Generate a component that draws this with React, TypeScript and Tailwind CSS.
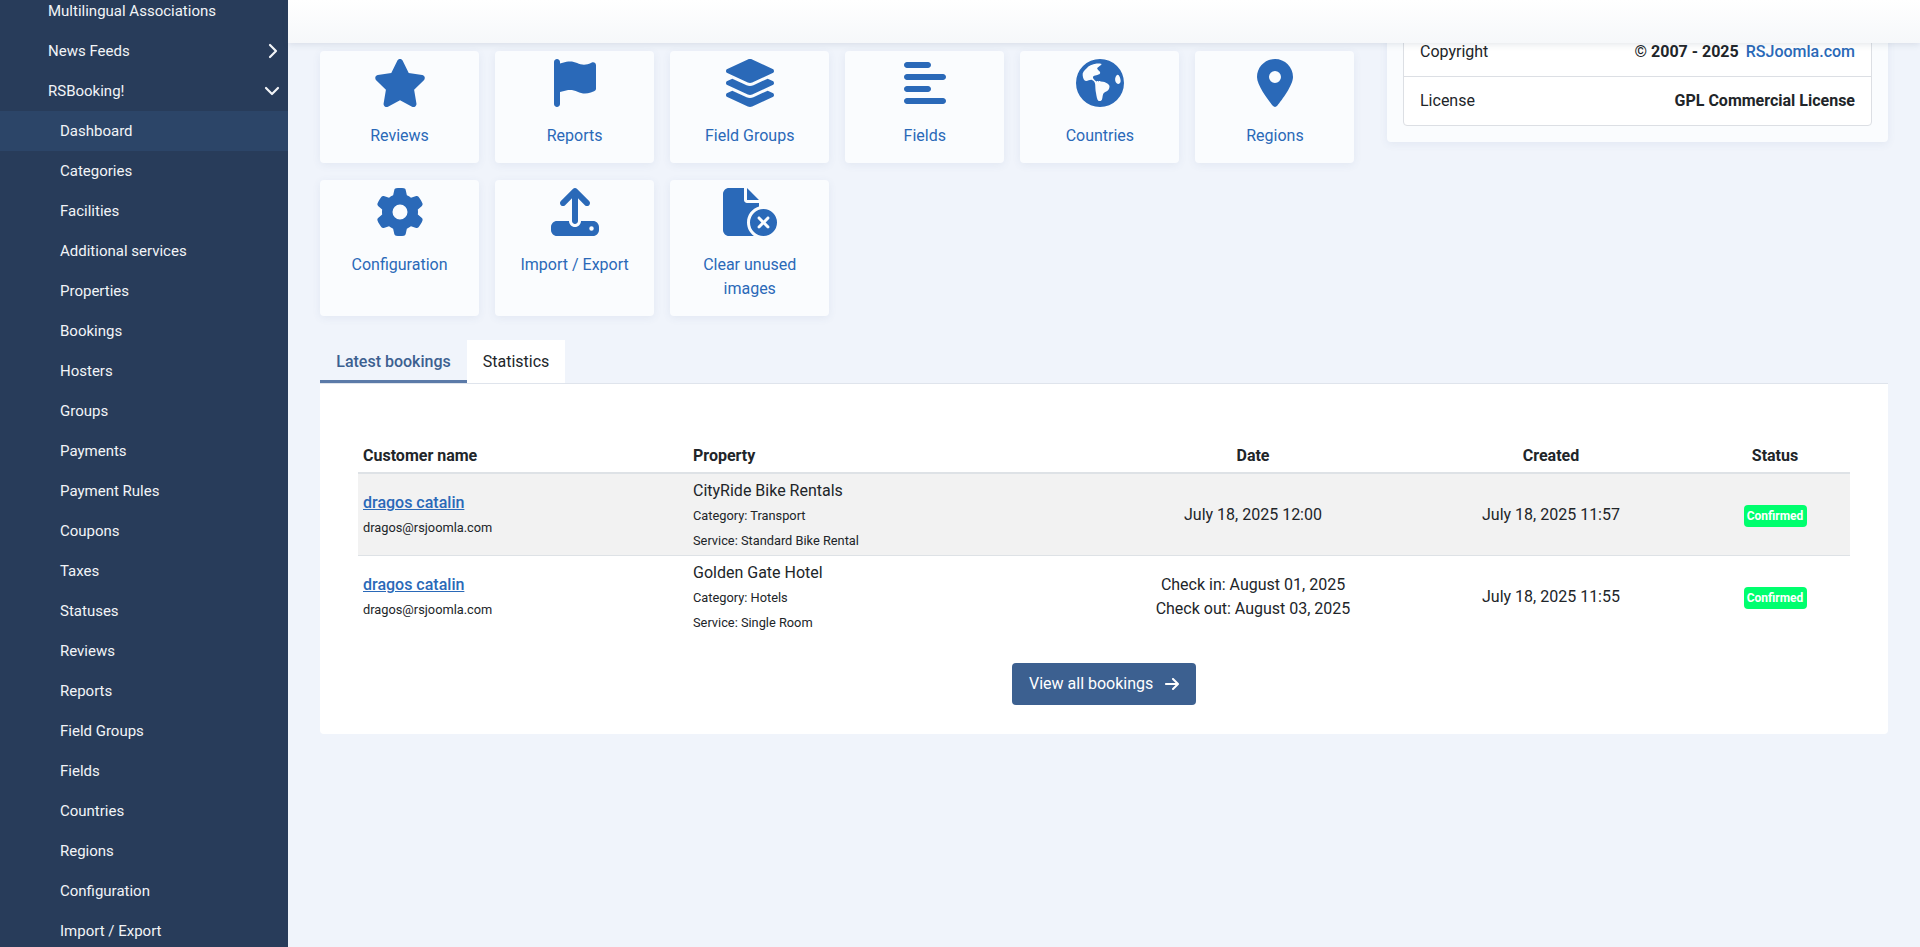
import {
  FaStar,
  FaFlag,
  FaLayerGroup,
  FaAlignLeft,
  FaLocationDot,
  FaGear,
  FaUpload,
  FaFileCircleXmark,
  FaArrowRight,
} from "react-icons/fa6";

type IconProps = { className?: string };

const SUB_ITEMS = [
  "Dashboard",
  "Categories",
  "Facilities",
  "Additional services",
  "Properties",
  "Bookings",
  "Hosters",
  "Groups",
  "Payments",
  "Payment Rules",
  "Coupons",
  "Taxes",
  "Statuses",
  "Reviews",
  "Reports",
  "Field Groups",
  "Fields",
  "Countries",
  "Regions",
  "Configuration",
  "Import / Export",
];

// the FA globe in the package has other continents, so this one is drawn
function GlobeIcon({ className }: IconProps) {
  return (
    <svg viewBox="0 0 48 48" className={className} fill="currentColor">
      <path
        fillRule="evenodd"
        d="M24 0a24 24 0 1 1 0 48a24 24 0 0 1 0-48zM20.700 4.600C16 5.500 12.500 7 10.700 9.300C8 11.500 6.200 14 6.700 16.500C7 19.500 8 21.800 10 21.900C12 22 14.500 20.300 16 21C18 22 19 23 19.200 25.500C19.400 28 19.300 31 20 34C20.500 37 21 40.500 22.300 41.700C23.700 42.500 25.300 42 25.900 40.800C26.700 38.500 26.500 35.500 27.800 34C29.500 32.500 32.300 32 32.900 30C33.400 28.500 34 27 32.800 25.700C31 24 29 23 27 22.700C24 22.300 21 23 19.300 21.700C18 20.500 16.500 19 17 17.700C18 16 22.500 16.500 24 14.500C25 13 22.500 11.500 21.300 10C20.700 8.500 24.500 7 25.700 5C24 4.500 22 4.400 20.700 4.600zM41.500 15.700C40 16.300 38.700 19 39.200 21.500C39.600 23.600 41 25 42.500 25C44 24.800 44.800 23.300 44.600 21.300C44.400 18.700 43 15.300 41.500 15.700z"
      />
    </svg>
  );
}

const CARDS: { label: string; icon: (p: IconProps) => React.ReactNode; width: string }[] = [
  { label: "Reviews", icon: FaStar, width: "w-[54px]" },
  { label: "Reports", icon: FaFlag, width: "w-[42px]" },
  { label: "Field Groups", icon: FaLayerGroup, width: "w-[54px]" },
  { label: "Fields", icon: FaAlignLeft, width: "w-[42px]" },
  { label: "Countries", icon: GlobeIcon, width: "w-12" },
  { label: "Regions", icon: FaLocationDot, width: "w-9" },
  { label: "Configuration", icon: FaGear, width: "w-12" },
  { label: "Import / Export", icon: FaUpload, width: "w-12" },
  { label: "Clear unused images", icon: FaFileCircleXmark, width: "w-[54px]" },
];

const BOOKINGS = [
  {
    property: "CityRide Bike Rentals",
    category: "Transport",
    service: "Standard Bike Rental",
    date: ["July 18, 2025 12:00"],
    created: "July 18, 2025 11:57",
  },
  {
    property: "Golden Gate Hotel",
    category: "Hotels",
    service: "Single Room",
    date: ["Check in: August 01, 2025", "Check out: August 03, 2025"],
    created: "July 18, 2025 11:55",
  },
];

function Sidebar() {
  return (
    <aside className="w-[288px] shrink-0 overflow-hidden bg-[#283c5a] text-[15px] text-[#f2f4f7]">
      <div className="-mt-[9px]">
        <div className="flex h-10 items-center pl-12">Multilingual Associations</div>
        <div className="flex h-10 items-center justify-between pl-12 pr-[9px]">
          News Feeds
          <svg viewBox="0 0 12 16" className="h-4 w-3" fill="none" stroke="currentColor" strokeWidth="2.2" strokeLinecap="round" strokeLinejoin="round">
            <path d="M3 2l6 6-6 6" />
          </svg>
        </div>
        <div className="flex h-10 items-center justify-between pl-12 pr-[8px]">
          RSBooking!
          <svg viewBox="0 0 16 12" className="h-3 w-4" fill="none" stroke="currentColor" strokeWidth="2.2" strokeLinecap="round" strokeLinejoin="round">
            <path d="M2 3l6 6 6-6" />
          </svg>
        </div>
        {SUB_ITEMS.map((item) => (
          <div
            key={item}
            className={`flex h-10 items-center pl-[60px] ${item === "Dashboard" ? "bg-[#2c4568]" : ""}`}
          >
            {item}
          </div>
        ))}
      </div>
    </aside>
  );
}

function Card({ label, icon: Icon, width }: (typeof CARDS)[number]) {
  return (
    <a className="flex flex-col items-center rounded bg-[#fafcfe] px-4 pb-[15px] pt-2 text-center text-[#2a69b8] shadow-[0_2px_8px_rgba(60,90,140,0.08)]">
      <Icon className={`mb-[17px] h-12 ${width}`} />
      <span>{label}</span>
    </a>
  );
}

function SystemInfo() {
  return (
    <div className="-mt-[24px] w-[501px] shrink-0 rounded bg-[#fafcfe] px-4 pb-4 shadow-[0_2px_8px_rgba(60,90,140,0.08)]">
      <div className="rounded-b border border-[#dcdfe4] bg-white text-[#212529]">
        <div className="flex h-[49px] items-center justify-between border-b border-[#dcdfe4] px-4">
          <span>Copyright</span>
          <span className="flex gap-[7px]">
            <strong className="font-bold">© 2007 - 2025</strong>
            <a className="font-medium text-[#2a69b8]">RSJoomla.com</a>
          </span>
        </div>
        <div className="flex h-12 items-center justify-between px-4">
          <span>License</span>
          <strong className="font-bold">GPL Commercial License</strong>
        </div>
      </div>
    </div>
  );
}

function BookingsTable() {
  return (
    <table className="w-full table-fixed border-collapse text-[#212529]">
      <thead>
        <tr className="border-b-2 border-[#dee2e6]">
          <th className="w-[330px] px-[5px] pb-[4px] pt-[6px] text-left font-bold">Customer name</th>
          <th className="w-[416px] px-[5px] pb-[4px] pt-[6px] text-left font-bold">Property</th>
          <th className="w-[298px] px-[5px] pb-[4px] pt-[6px] text-center font-bold">Date</th>
          <th className="w-[298px] px-[5px] pb-[4px] pt-[6px] text-center font-bold">Created</th>
          <th className="w-[150px] px-[5px] pb-[4px] pt-[6px] text-center font-bold">Status</th>
        </tr>
      </thead>
      <tbody>
        {BOOKINGS.map((b, i) => (
          <tr key={b.property} className={i === 0 ? "border-b border-[#dee2e6] bg-[#f2f2f2]" : ""}>
            <td className="px-[5px] pb-[5px] pt-[7px]">
              <a className="font-medium text-[#2a69b8] underline">dragos catalin</a>
              <br />
              <small>dragos@rsjoomla.com</small>
            </td>
            <td className="px-[5px] pb-[2px] pt-[5px]">
              {b.property}
              <br />
              <small>Category: {b.category}</small>
              <br />
              <small>Service: {b.service}</small>
            </td>
            <td className="px-[5px] pb-[5px] pt-[6px] text-center">
              {b.date.map((d) => (
                <div key={d}>{d}</div>
              ))}
            </td>
            <td className="p-[5px] text-center">{b.created}</td>
            <td className="px-[5px] pb-[5px] pt-[7px] text-center">
              <span className="inline-flex h-[22px] w-[63px] items-center justify-center rounded bg-[#00ff6e] align-middle text-[12px] font-bold text-white">
                Confirmed
              </span>
            </td>
          </tr>
        ))}
      </tbody>
    </table>
  );
}

export default function App() {
  return (
    <div className="flex h-[947px] overflow-hidden bg-[#f0f4fb] font-['Roboto',sans-serif] text-base leading-6">
      <Sidebar />
      <main className="flex min-w-0 flex-1 flex-col">
        <header className="relative z-10 h-[43px] shrink-0 bg-gradient-to-b from-white to-[#f6f8fa] shadow-[0_2px_6px_rgba(60,80,110,0.12)]" />
        <div className="px-8 pt-2">
          <div className="flex items-start gap-[32.5px]">
            <div className="grid w-[1034.5px] shrink-0 grid-cols-6 gap-x-4 gap-y-[17px]">
              {CARDS.map((c) => (
                <Card key={c.label} {...c} />
              ))}
            </div>
            <SystemInfo />
          </div>

          <div className="mt-6 flex h-11 border-b border-[#dfe4ec] text-[#212529]">
            <div className="flex w-[147px] items-center justify-center border-b-[3px] border-[#5b7aa8] pt-[3px] font-medium text-[#3c6090]">
              Latest bookings
            </div>
            <div className="flex w-[98px] items-center justify-center bg-white">Statistics</div>
          </div>
          <section className="rounded-b bg-white px-[38px] pb-[29px] pt-[54px]">
            <BookingsTable />
            <div className="mt-[26px] flex justify-center">
              <a className="flex h-[42px] w-[184px] items-center gap-3 rounded bg-[#3c6090] pl-[17px] text-white">
                View all bookings
                <FaArrowRight className="h-4 w-[14px]" />
              </a>
            </div>
          </section>
        </div>
      </main>
    </div>
  );
}
